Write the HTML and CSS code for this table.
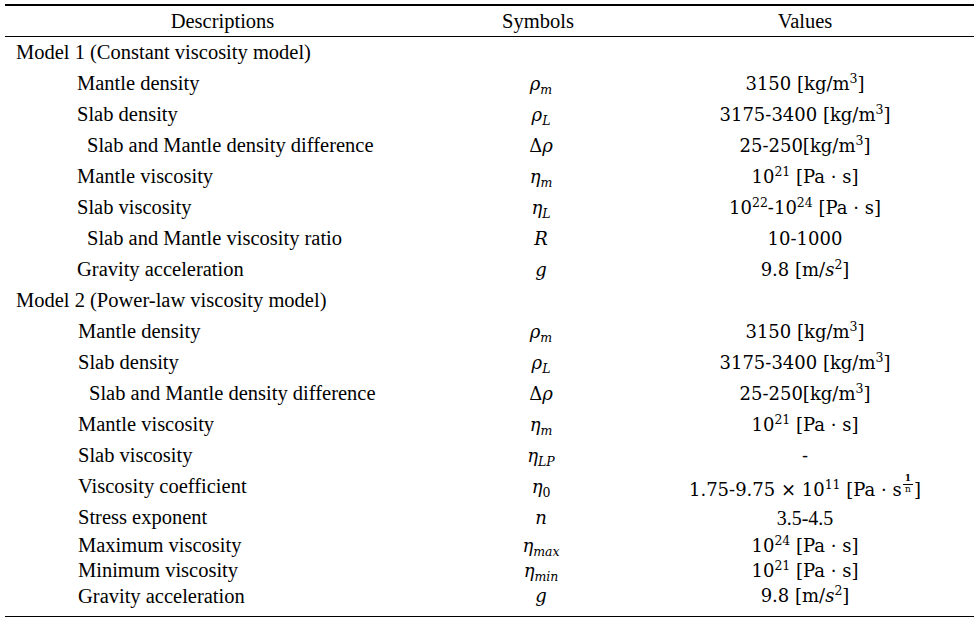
FILE: index.html
```html
<!DOCTYPE html>
<html>
<head>
<meta charset="utf-8">
<link rel="stylesheet" href="styles.css">
</head>
<body>
<table class="params">
<colgroup><col class="c1"><col class="c2"><col class="c3"></colgroup>
<thead>
<tr><th>Descriptions</th><th>Symbols</th><th>Values</th></tr>
</thead>
<tbody>
<tr class="group"><td colspan="3">Model 1 (Constant viscosity model)</td></tr>
<tr><td class="d1">Mantle density</td><td class="sym"><i>ρ</i><sub><i>m</i></sub></td><td class="val">3150 [kg/m<sup>3</sup>]</td></tr>
<tr><td class="d1">Slab density</td><td class="sym"><i>ρ</i><sub><i>L</i></sub></td><td class="val">3175-3400 [kg/m<sup>3</sup>]</td></tr>
<tr><td class="d2">Slab and Mantle density difference</td><td class="sym">Δ<i>ρ</i></td><td class="val">25-250[kg/m<sup>3</sup>]</td></tr>
<tr><td class="d1">Mantle viscosity</td><td class="sym"><i>η</i><sub><i>m</i></sub></td><td class="val">10<sup>21</sup> [Pa · s]</td></tr>
<tr><td class="d1">Slab viscosity</td><td class="sym"><i>η</i><sub><i>L</i></sub></td><td class="val">10<sup>22</sup>-10<sup>24</sup> [Pa · s]</td></tr>
<tr><td class="d2">Slab and Mantle viscosity ratio</td><td class="sym"><i>R</i></td><td class="val">10-1000</td></tr>
<tr><td class="d1">Gravity acceleration</td><td class="sym"><i>g</i></td><td class="val">9.8 [m/<i>s</i><sup>2</sup>]</td></tr>
<tr class="group"><td colspan="3">Model 2 (Power-law viscosity model)</td></tr>
<tr><td class="e1">Mantle density</td><td class="sym"><i>ρ</i><sub><i>m</i></sub></td><td class="val">3150 [kg/m<sup>3</sup>]</td></tr>
<tr><td class="e1">Slab density</td><td class="sym"><i>ρ</i><sub><i>L</i></sub></td><td class="val">3175-3400 [kg/m<sup>3</sup>]</td></tr>
<tr><td class="e2">Slab and Mantle density difference</td><td class="sym">Δ<i>ρ</i></td><td class="val">25-250[kg/m<sup>3</sup>]</td></tr>
<tr><td class="e1">Mantle viscosity</td><td class="sym"><i>η</i><sub><i>m</i></sub></td><td class="val">10<sup>21</sup> [Pa · s]</td></tr>
<tr><td class="e1">Slab viscosity</td><td class="sym"><i>η</i><sub><i>LP</i></sub></td><td class="val">-</td></tr>
<tr><td class="e1">Viscosity coefficient</td><td class="sym"><i>η</i><sub>0</sub></td><td class="val">1.75-9.75 × 10<sup>11</sup> [Pa · s<span class="frac"><span class="num">1</span><span class="den">n</span></span>]</td></tr>
<tr><td class="e1">Stress exponent</td><td class="sym"><i>n</i></td><td class="val times">3.5-4.5</td></tr>
<tr class="short"><td class="e1">Maximum viscosity</td><td class="sym"><i>η</i><sub><i>max</i></sub></td><td class="val">10<sup>24</sup> [Pa · s]</td></tr>
<tr class="short"><td class="e1">Minimum viscosity</td><td class="sym"><i>η</i><sub><i>min</i></sub></td><td class="val">10<sup>21</sup> [Pa · s]</td></tr>
<tr class="short last"><td class="e1">Gravity acceleration</td><td class="sym"><i>g</i></td><td class="val">9.8 [m/<i>s</i><sup>2</sup>]</td></tr>
</tbody>
</table>
</body>
</html>
```
FILE: styles.css
```css
html, body {
  margin: 0;
  padding: 0;
  background: #fff;
  color: #000;
}

.params {
  margin: 4px 0 0 5px;
  width: 969px;
  border-collapse: separate;
  border-spacing: 0;
  table-layout: fixed;
  font-family: "Liberation Serif", "Times New Roman", serif;
  font-size: 20.5px;
  border-top: 2px solid #000;
  border-bottom: 1px solid #000;
}

.c1 { width: 435px; }
.c2 { width: 196px; }
.c3 { width: 338px; }

.params th {
  height: 30px;
  padding: 0;
  font-weight: normal;
  text-align: center;
  vertical-align: middle;
  border-bottom: 1px solid #000;
  line-height: 1;
}

.params td {
  height: 31px;
  padding: 0;
  vertical-align: middle;
  line-height: 1;
  white-space: nowrap;
}

.params tr.short td {
  height: 25px;
}

.params tr.last td {
  height: 26px;
  padding-bottom: 7px;
}

.group td { padding-left: 11px; }
.d1 { padding-left: 72px !important; }
.d2 { padding-left: 82px !important; }
.e1 { padding-left: 73px !important; }
.e2 { padding-left: 84px !important; }

.sym {
  text-align: center;
  font-family: "DejaVu Serif", serif;
  font-size: 18px;
  padding-left: 6px !important;
}

.sym i {
  font-style: italic;
}

.sym sub {
  font-size: 12.5px;
  line-height: 0;
  vertical-align: -4px;
}

.val {
  text-align: center;
  font-family: "DejaVu Serif", serif;
  font-size: 18px;
}

.val.times {
  font-family: "Liberation Serif", serif;
  font-size: 20px;
}

.val sup {
  font-size: 12.5px;
  line-height: 0;
  vertical-align: 7px;
}

.frac {
  display: inline-flex;
  flex-direction: column;
  align-items: center;
  vertical-align: 15px;
  font-size: 9px;
  line-height: 1;
  margin: 0 1px 0 1px;
}

.frac .num {
  border-bottom: 1px solid #000;
  padding: 0 2px 1px;
  font-weight: bold;
}

.frac .den {
  padding-top: 0;
}
```
